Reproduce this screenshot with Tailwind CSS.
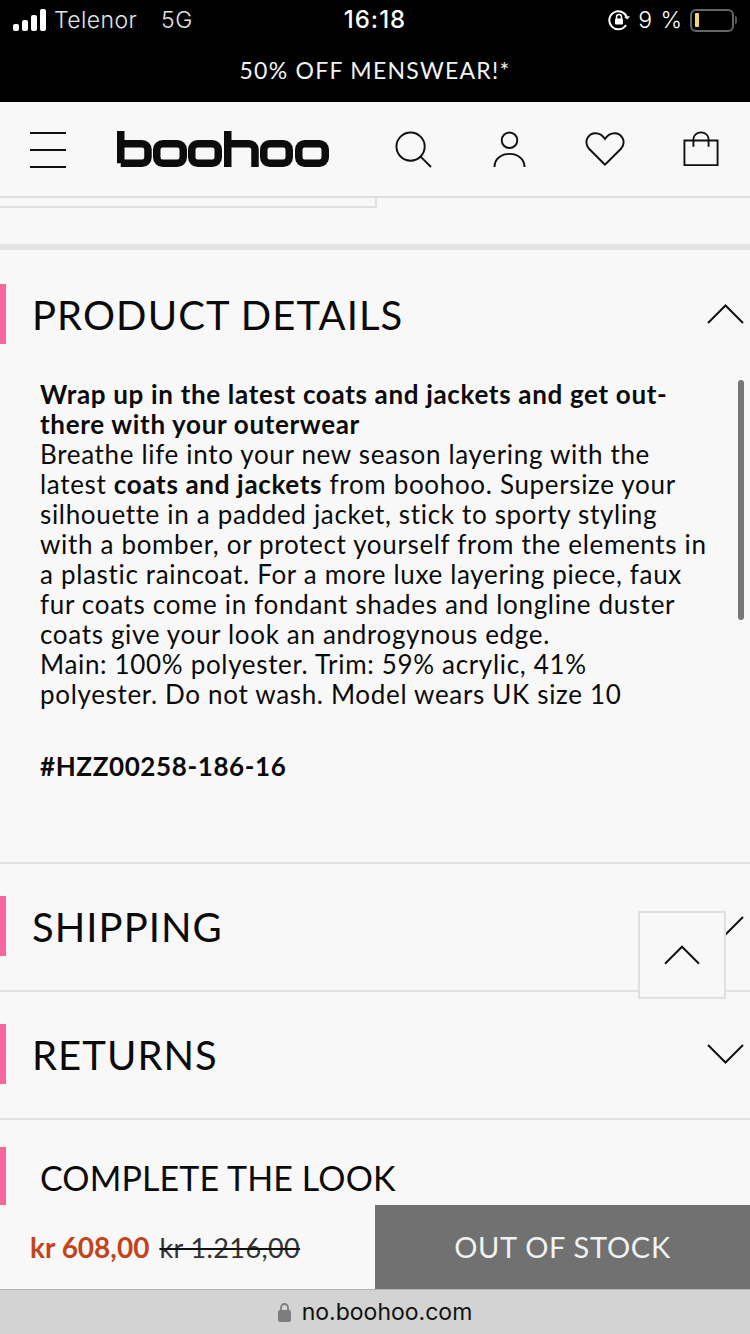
<!DOCTYPE html>
<html lang="en">
<head>
<meta charset="UTF-8" />
<meta name="viewport" content="width=device-width, initial-scale=1.0"/>
<title>boohoo product details</title>
<script src="https://cdn.jsdelivr.net/npm/@tailwindcss/browser@4"></script>
</head>
<body class="bg-[#f8f8f8] font-['Lato','Noto_Sans',sans-serif] text-[#0b0b0b]">
<div class="relative w-[750px] h-[1334px] flex flex-col overflow-hidden">

  <!-- status bar + promo -->
  <div class="h-[102px] shrink-0 bg-black text-white">
    <div class="h-[40px] flex items-center justify-between pl-[13px] pr-[13px] font-['Inter',sans-serif] text-[23px]">
      <div class="flex items-center w-[260px]">
        <svg width="34" height="22" viewBox="0 0 34 22" fill="#fff"><rect x="0" y="15" width="6" height="7" rx="2"/><rect x="9" y="11" width="6" height="11" rx="2"/><rect x="18" y="6" width="6" height="16" rx="2"/><rect x="27" y="0" width="6" height="22" rx="2"/></svg>
        <span class="ml-[7px] font-light tracking-[0.4px] text-[#e4e4e4]">Telenor</span>
        <span class="ml-[24px] font-light tracking-[0.4px] text-[#e4e4e4]">5G</span>
      </div>
      <div class="font-medium text-[24px] tracking-[1px]">16:18</div>
      <div class="flex items-center justify-end w-[260px]">
        <svg width="22" height="22" viewBox="0 0 22 22" fill="none" stroke="#fff" stroke-width="2"><path d="M18 16a9 9 0 1 1 1-7"/><path d="M16 8l3.500 2.500L22 7" fill="#fff" stroke="none"/><rect x="7" y="9.500" width="8" height="6" rx="1" fill="#fff" stroke="none"/><path d="M8.500 10V8a2.500 2.500 0 0 1 5 0v2" stroke-width="1.500"/></svg>
        <span class="ml-[8px] font-light tracking-[1px]">9 %</span>
        <div class="ml-[7px] w-[44px] h-[23px] rounded-[6px] border-2 border-[#666] flex items-center pl-[3px]"><div class="w-[4px] h-[14px] rounded-[1px] bg-[#f4d66a]"></div></div>
        <div class="ml-[1px] w-[2px] h-[8px] rounded-r-full bg-[#555]"></div>
      </div>
    </div>
    <div class="h-[62px] flex items-center justify-center pb-[2px] text-[23px] tracking-[1.25px] text-[#f2f2f2]">50% OFF MENSWEAR!*</div>
  </div>

  <!-- header -->
  <header class="h-[96px] shrink-0 flex items-center border-b-2 border-[#e0e0e0] relative">
    <svg class="ml-[30px]" width="36" height="38" viewBox="0 0 36 38" stroke="#111" stroke-width="2"><path d="M0 3h36M0 20h36M0 37h36"/></svg>
    <svg class="ml-[51px]" role="img" aria-label="boohoo" width="212" height="36" viewBox="0 0 212 36" fill="none" stroke="#0c0c0c" stroke-width="7.500">
      <path d="M3.750 0V32.250M3.750 12.750H25a6 6 0 0 1 6 6v7.500a6 6 0 0 1-6 6H3.750"/>
      <rect x="39.750" y="12.750" width="26.500" height="19.500" rx="6"/>
      <rect x="74.750" y="12.750" width="26.500" height="19.500" rx="6"/>
      <path d="M110.750 0V36M110.750 12.750H132a6 6 0 0 1 6 6V36"/>
      <rect x="146.750" y="12.750" width="25.500" height="19.500" rx="6"/>
      <rect x="181.750" y="12.750" width="26.500" height="19.500" rx="6"/>
    </svg>
    <svg class="ml-[66px]" width="37" height="37" viewBox="0 0 38 38" fill="none" stroke="#111" stroke-width="2"><circle cx="16" cy="16" r="14.500"/><path d="M26 26l11 11"/></svg>
    <svg class="ml-[61px]" width="33" height="37" viewBox="0 0 34 38" fill="none" stroke="#111" stroke-width="2"><circle cx="17" cy="9.500" r="8"/><path d="M1.500 37c0-18 31-18 31 0"/></svg>
    <svg class="ml-[59px]" width="40" height="35" viewBox="0 0 42 36" fill="none" stroke="#111" stroke-width="2"><path d="M21 34L4 17C-2 9 4 1 11 1c5 0 8 3 10 6 2-3 5-6 10-6 7 0 13 8 7 16z"/></svg>
    <svg class="ml-[58px]" width="36" height="36" viewBox="0 0 38 37" fill="none" stroke="#111" stroke-width="2"><path d="M1.500 9.500h35v26h-35z"/><path d="M11 16V8a8 7 0 0 1 16 0v8"/></svg>
  </header>

  <main class="flex-1 overflow-hidden">
    <!-- bottom of the box above -->
    <div class="h-[52px] border-b-[6px] border-[#e4e4e4]">
      <div class="w-[377px] h-[10px] border-r-2 border-b-2 border-[#e0e0e0]"></div>
    </div>

    <section class="h-[614px] border-b-2 border-[#e2e2e2] pt-[34px]">
      <div class="h-[60px] border-l-[6px] border-[#f7679d] pl-[26px] pr-[6px] flex items-center justify-between">
        <h2 class="text-[40px] translate-y-[1px] tracking-[1.1px] font-normal">PRODUCT DETAILS</h2>
        <svg width="37" height="20" viewBox="0 0 37 20" fill="none" stroke="#111" stroke-width="2"><path d="M1 19L18.500 1.500 36 19"/></svg>
      </div>
      <div class="mt-[35px] pl-[40px] pr-[20px] text-[26px] leading-[30px] tracking-[0.67px]">
        <p class="font-bold">Wrap up in the latest coats and jackets and get out-<br>there with your outerwear</p>
        <p>Breathe life into your new season layering with the<br>latest <b>coats and jackets</b> from boohoo. Supersize your<br>silhouette in a padded jacket, stick to sporty styling<br>with a bomber, or protect yourself from the elements in<br>a plastic raincoat. For a more luxe layering piece, faux<br>fur coats come in fondant shades and longline duster<br>coats give your look an androgynous edge.</p>
        <p>Main: 100% polyester. Trim: 59% acrylic, 41%<br>polyester. Do not wash. Model wears UK size 10</p>
        <p class="mt-[42px] font-bold tracking-[0.6px]">#HZZ00258-186-16</p>
      </div>
    </section>

    <section class="h-[128px] border-b-2 border-[#e2e2e2] pt-[32px]">
      <div class="h-[60px] border-l-[6px] border-[#f7679d] pl-[26px] pr-[6px] flex items-center justify-between">
        <h2 class="text-[40px] translate-y-[1px] tracking-[1.05px] font-normal">SHIPPING</h2>
        <svg width="37" height="20" viewBox="0 0 37 20" fill="none" stroke="#111" stroke-width="2"><path d="M1 1l17.500 17.500L36 1"/></svg>
      </div>
    </section>

    <section class="h-[128px] border-b-2 border-[#e2e2e2] pt-[32px]">
      <div class="h-[60px] border-l-[6px] border-[#f7679d] pl-[26px] pr-[6px] flex items-center justify-between">
        <h2 class="text-[40px] translate-y-[1px] tracking-[1.05px] font-normal">RETURNS</h2>
        <svg width="37" height="20" viewBox="0 0 37 20" fill="none" stroke="#111" stroke-width="2"><path d="M1 1l17.500 17.500L36 1"/></svg>
      </div>
    </section>

    <section class="pt-[27px]">
      <div class="h-[58px] border-l-[6px] border-[#f7679d] pl-[34px] pt-[11px]">
        <h2 class="text-[34px] leading-[40px] tracking-[0.12px] font-normal">COMPLETE THE LOOK</h2>
      </div>
    </section>
  </main>

  <!-- price bar -->
  <div class="h-[84px] shrink-0 flex items-center bg-[#f8f8f8]">
    <div class="w-[375px] pl-[30px] flex items-baseline">
      <span class="text-[28px] font-bold text-[#c4431b]">kr 608,00</span>
      <span class="ml-[10px] text-[27px] tracking-[0.4px] text-[#333] line-through decoration-2 decoration-[#111]">kr 1.216,00</span>
    </div>
    <div class="w-[375px] h-full bg-[#717171] flex items-center justify-center text-[29px] tracking-[0.7px] text-[#f2f2f2]">OUT OF STOCK</div>
  </div>

  <!-- safari url bar -->
  <div class="h-[45px] shrink-0 bg-[#d3d3d3] border-t border-[#b5b5b5] flex items-center justify-center font-['Inter',sans-serif] text-[23px] text-[#111]">
    <svg width="13" height="19" viewBox="0 0 13 19" fill="#7d7d7f"><rect x="0" y="7" width="13" height="12" rx="2"/><path d="M3 8V4.500a3.500 3.500 0 0 1 7 0V8" fill="none" stroke="#7d7d7f" stroke-width="1.800"/></svg>
    <span class="ml-[11px]">no.boohoo.com</span>
  </div>

  <!-- overlays -->
  <div class="absolute left-[738px] top-[380px] w-[6px] h-[240px] rounded-full bg-[#777]"></div>
  <div class="absolute left-[638px] top-[911px] w-[88px] h-[88px] bg-[#f8f8f8] border-2 border-[#e0e0e0] flex items-center justify-center">
    <svg width="36" height="20" viewBox="0 0 37 20" fill="none" stroke="#111" stroke-width="2"><path d="M1 19L18.500 1.500 36 19"/></svg>
  </div>
</div>
</body>
</html>
